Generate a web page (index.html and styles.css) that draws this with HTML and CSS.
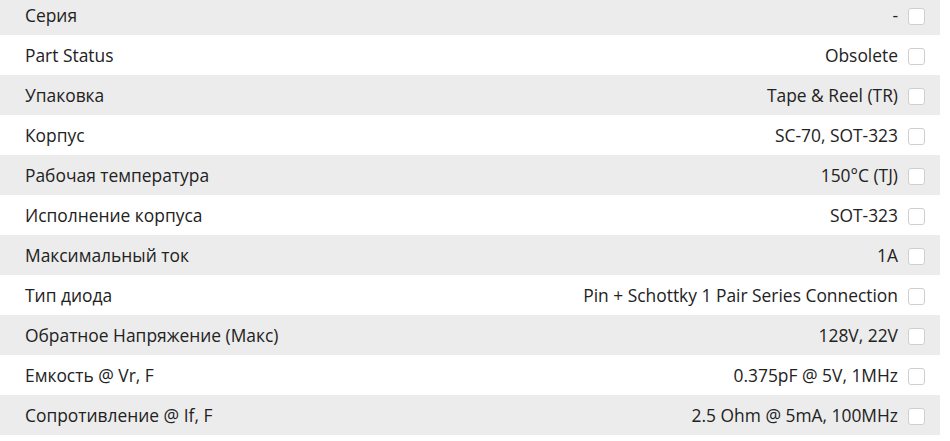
FILE: index.html
```html
<!DOCTYPE html>
<html lang="ru">
<head>
<meta charset="utf-8">
<link rel="stylesheet" href="styles.css">
</head>
<body>
<div class="specs">
  <div class="row gray"><span class="name">Серия</span><span class="val">-</span><span class="box"></span></div>
  <div class="row"><span class="name">Part Status</span><span class="val">Obsolete</span><span class="box"></span></div>
  <div class="row gray"><span class="name">Упаковка</span><span class="val">Tape &amp; Reel (TR)</span><span class="box"></span></div>
  <div class="row"><span class="name">Корпус</span><span class="val">SC-70, SOT-323</span><span class="box"></span></div>
  <div class="row gray"><span class="name">Рабочая температура</span><span class="val">150°C (TJ)</span><span class="box"></span></div>
  <div class="row"><span class="name">Исполнение корпуса</span><span class="val">SOT-323</span><span class="box"></span></div>
  <div class="row gray"><span class="name">Максимальный ток</span><span class="val">1A</span><span class="box"></span></div>
  <div class="row"><span class="name">Тип диода</span><span class="val">Pin + Schottky 1 Pair Series Connection</span><span class="box"></span></div>
  <div class="row gray"><span class="name">Обратное Напряжение (Макс)</span><span class="val">128V, 22V</span><span class="box"></span></div>
  <div class="row"><span class="name">Емкость @ Vr, F</span><span class="val">0.375pF @ 5V, 1MHz</span><span class="box"></span></div>
  <div class="row gray"><span class="name">Сопротивление @ If, F</span><span class="val">2.5 Ohm @ 5mA, 100MHz</span><span class="box"></span></div>
</div>
</body>
</html>
```

FILE: styles.css
```css
html, body {
  margin: 0;
  padding: 0;
  background: #fff;
}
body {
  font-family: "Open Sans", "Liberation Sans", sans-serif;
  font-size: 17.4px;
  color: #222;
  overflow: hidden;
}
.specs {
  width: 940px;
  margin-top: -5px;
  display: flex;
  flex-direction: column;
}
.row {
  height: 40px;
  display: flex;
  align-items: center;
  padding: 0 15px 0 25px;
  box-sizing: border-box;
}
.row.gray {
  background: #ececec;
}
.name {
  flex: 1;
}
.val {
  margin-right: 10px;
}
.box {
  width: 17px;
  height: 17px;
  box-sizing: border-box;
  border: 1px solid #cfcfcf;
  border-radius: 3px;
  background: #fff;
  margin-top: 2px;
}
```
